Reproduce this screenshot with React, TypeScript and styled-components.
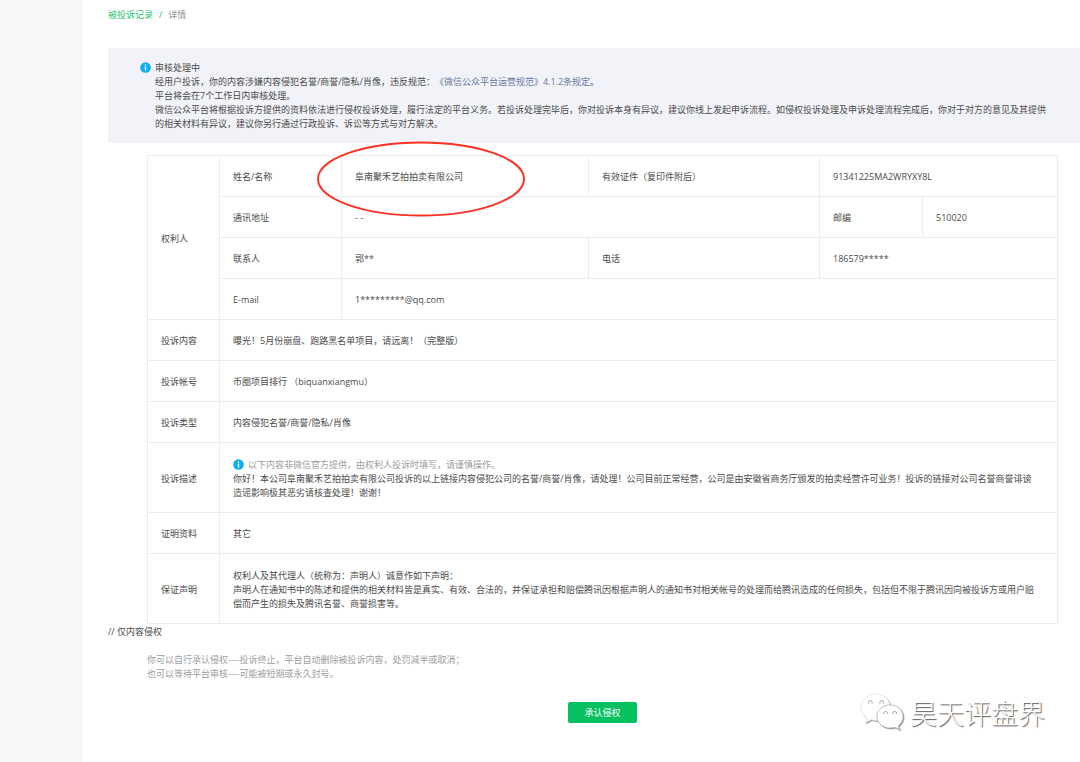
import React from "react";
import styled, { createGlobalStyle } from "styled-components";

const GlobalStyle = createGlobalStyle`
  *, *::before, *::after { box-sizing: border-box; }
  body {
    margin: 0;
    background: #fff;
    color: #4a4a4a;
    font-family: "Open Sans", "Noto Sans CJK SC", sans-serif;
    font-size: 9px;
    line-height: 14px;
    text-spacing-trim: space-all;
  }
  p { margin: 0; }
`;

const Page = styled.div`
  position: relative;
  display: flex;
  min-height: 100vh;
`;

const Sidebar = styled.aside`
  flex: 0 0 82px;
  background: #f6f8f9;
  border-right: 1px solid #f1f2f4;
`;

const Main = styled.main`
  flex: 1;
  min-width: 0;
  padding: 8px 0 38px 26px;
`;

const Breadcrumb = styled.nav`
  display: flex;
  gap: 6px;
  color: #8f8f8f;
`;

const Link = styled.a<{ $tone: "green" | "blue" }>`
  color: ${(p) => (p.$tone === "green" ? "#1fc56f" : "#6878a0")};
  text-decoration: none;
`;

const Slash = styled.span`
  color: #1fc56f;
`;

const Notice = styled.section`
  display: flex;
  gap: 4px;
  margin-top: 26px;
  padding: 13px 22px 12px 32px;
  background: #f2f3f8;
`;

const NoticeBody = styled.div`
  flex: 1;
  padding-right: 8px;
`;

const Icon = styled.svg`
  flex: none;
  width: 11px;
  height: 11px;
  margin-top: 1px;
`;

const Content = styled.div`
  margin: 12px 22px 1px 39px;
`;

const Table = styled.table`
  width: 100%;
  table-layout: fixed;
  border-collapse: collapse;
`;

const Col = styled.col<{ $width?: number }>`
  width: ${(p) => (p.$width ? `${p.$width}px` : "auto")};
`;

const Row = styled.tr<{ $tall?: boolean }>`
  height: ${(p) => (p.$tall ? 70 : 41)}px;
`;

const Label = styled.th`
  padding: 14px 13px 12px;
  border: 1px solid #ececec;
  font-weight: 400;
  text-align: left;
`;

const Value = styled.td`
  padding: 14px 13px 12px;
  border: 1px solid #ececec;
`;

const LongText = styled.p`
  padding-right: 6px;
`;

const Hint = styled.p`
  display: flex;
  gap: 4px;
  color: #9c9c9c;
`;

const Marked = styled.div`
  position: relative;
`;

const Ring = styled.svg`
  position: absolute;
  left: -39px;
  top: -30px;
  width: 210px;
  height: 78px;
  pointer-events: none;
`;

const SectionTitle = styled.p`
  font-size: 9px;
`;

const Notes = styled.div`
  margin: 14px 22px 0 39px;
  color: #9c9c9c;
`;

const Actions = styled.div`
  display: flex;
  justify-content: center;
  margin: 21px 22px 0 39px;
`;

const Button = styled.button`
  width: 69px;
  height: 21px;
  padding: 0;
  border: 0;
  border-radius: 2px;
  background: #07c160;
  color: #fff;
  font: inherit;
`;

const Watermark = styled.div`
  position: absolute;
  right: 35px;
  bottom: 29px;
  display: flex;
  align-items: center;
  gap: 5px;
  color: #fff;
  font-family: "Noto Sans CJK SC", sans-serif;
  font-size: 27px;
  font-weight: 300;
  line-height: 40px;
  text-shadow: 1px 1px 1px #555;
`;

const WechatLogo = styled.svg`
  width: 45px;
  height: 40px;
  filter: drop-shadow(1px 1px 0 #999);
`;

const InfoIcon = () => (
  <Icon viewBox="0 0 11 11" aria-hidden="true">
    <circle cx="5.5" cy="5.5" r="5.3" fill="#10aeee" />
    <circle cx="5.5" cy="3" r="0.8" fill="#fff" />
    <path d="M4.8 4.6h1.4v4H4.8z" fill="#fff" />
  </Icon>
);

const simpleRows = [
  ["投诉内容", "曝光！5月份崩盘、跑路黑名单项目，请远离！（完整版）"],
  ["投诉帐号", "币圈项目排行 （biquanxiangmu）"],
  ["投诉类型", "内容侵犯名誉/商誉/隐私/肖像"],
];

export default function App() {
  return (
    <>
      <GlobalStyle />
      <Page lang="zh-CN">
        <Sidebar />
        <Main>
          <Breadcrumb>
            <Link $tone="green" href="#records">被投诉记录</Link>
            <Slash>/</Slash>
            <span>详情</span>
          </Breadcrumb>

          <Notice>
            <InfoIcon />
            <NoticeBody>
              <p>审核处理中</p>
              <p>
                经用户投诉，你的内容涉嫌内容侵犯名誉/商誉/隐私/肖像，违反规范：
                <Link $tone="blue" href="#rules">《微信公众平台运营规范》4.1.2条规定</Link>。
              </p>
              <p>平台将会在7个工作日内审核处理。</p>
              <p>
                微信公众平台将根据投诉方提供的资料依法进行侵权投诉处理，履行法定的平台义务。若投诉处理完毕后，你对投诉本身有异议，建议你线上发起申诉流程。如侵权投诉处理及申诉处理流程完成后，你对于对方的意见及其提供的相关材料有异议，建议你另行通过行政投诉、诉讼等方式与对方解决。
              </p>
            </NoticeBody>
          </Notice>

          <Content>
            <Table>
              <colgroup>
                <Col $width={72} />
                <Col $width={122} />
                <Col />
                <Col $width={231} />
                <Col $width={103} />
                <Col $width={135} />
              </colgroup>
              <tbody>
                <Row>
                  <Label rowSpan={4}>权利人</Label>
                  <Label>姓名/名称</Label>
                  <Value>
                    <Marked>
                      阜南聚禾艺拍拍卖有限公司
                      <Ring viewBox="0 0 210 78" aria-hidden="true">
                        <ellipse cx="105" cy="39" rx="103" ry="36.5" fill="none" stroke="#fb3223" strokeWidth="1.8" />
                      </Ring>
                    </Marked>
                  </Value>
                  <Label>有效证件（复印件附后）</Label>
                  <Value colSpan={2}>91341225MA2WRYXY8L</Value>
                </Row>
                <Row>
                  <Label>通讯地址</Label>
                  <Value colSpan={2}>- -</Value>
                  <Label>邮编</Label>
                  <Value>510020</Value>
                </Row>
                <Row>
                  <Label>联系人</Label>
                  <Value>郭**</Value>
                  <Label>电话</Label>
                  <Value colSpan={2}>186579*****</Value>
                </Row>
                <Row>
                  <Label>E-mail</Label>
                  <Value colSpan={4}>1*********@qq.com</Value>
                </Row>
                {simpleRows.map(([label, value]) => (
                  <Row key={label}>
                    <Label>{label}</Label>
                    <Value colSpan={5}>{value}</Value>
                  </Row>
                ))}
                <Row $tall>
                  <Label>投诉描述</Label>
                  <Value colSpan={5}>
                    <Hint>
                      <InfoIcon />
                      以下内容非微信官方提供，由权利人投诉时填写，请谨慎操作。
                    </Hint>
                    <LongText>
                      你好！本公司阜南聚禾艺拍拍卖有限公司投诉的以上链接内容侵犯公司的名誉/商誉/肖像，请处理！公司目前正常经营，公司是由安徽省商务厅颁发的拍卖经营许可业务！投诉的链接对公司名誉商誉诽谤造谣影响极其恶劣请核查处理！谢谢！
                    </LongText>
                  </Value>
                </Row>
                <Row>
                  <Label>证明资料</Label>
                  <Value colSpan={5}>其它</Value>
                </Row>
                <Row $tall>
                  <Label>保证声明</Label>
                  <Value colSpan={5}>
                    <p>权利人及其代理人（统称为：声明人）诚意作如下声明：</p>
                    <LongText>
                      声明人在通知书中的陈述和提供的相关材料皆是真实、有效、合法的，并保证承担和赔偿腾讯因根据声明人的通知书对相关帐号的处理而给腾讯造成的任何损失，包括但不限于腾讯因向被投诉方或用户赔偿而产生的损失及腾讯名誉、商誉损害等。
                    </LongText>
                  </Value>
                </Row>
              </tbody>
            </Table>
          </Content>

          <SectionTitle>// 仅内容侵权</SectionTitle>
          <Notes>
            <p>你可以自行承认侵权----投诉终止，平台自动删除被投诉内容，处罚减半或取消；</p>
            <p>也可以等待平台审核----可能被短期或永久封号。</p>
          </Notes>
          <Actions>
            <Button type="button">承认侵权</Button>
          </Actions>
        </Main>

        <Watermark>
          <WechatLogo viewBox="0 0 45 40" aria-hidden="true">
            <path
              d="M16 1C7.500 1 1 7 1 14.500c0 4.500 2.200 8 6 10.500l-1.500 4.500 5.500-2.800c2 .6 4 .8 6.500.8C16 19 22 12 30 12 28.500 5.500 23.500 1 16 1z"
              fill="#fff" stroke="#e4e4e4" strokeWidth="0.8"
            />
            <path
              d="M30 12c-7.500 0-13 5-13 11.500S22.500 35 30 35c1.800 0 3.500-.3 5-.8l4.500 2.500-1.200-4c3-2.200 4.700-5.400 4.700-9.200C43 17 37.300 12 30 12z"
              fill="#fff" stroke="#b5b5b5" strokeWidth="0.8"
            />
            <g fill="none" stroke="#999" strokeWidth="1">
              <path d="M8.500 10.500a2 2 0 1 1 3.600 0M20 10.500a2 2 0 1 1 3.600 0" />
              <path d="M24 21a1.800 1.800 0 1 1 3.200 0M33 21a1.800 1.800 0 1 1 3.200 0" />
            </g>
          </WechatLogo>
          <span>昊天评盘界</span>
        </Watermark>
      </Page>
    </>
  );
}
